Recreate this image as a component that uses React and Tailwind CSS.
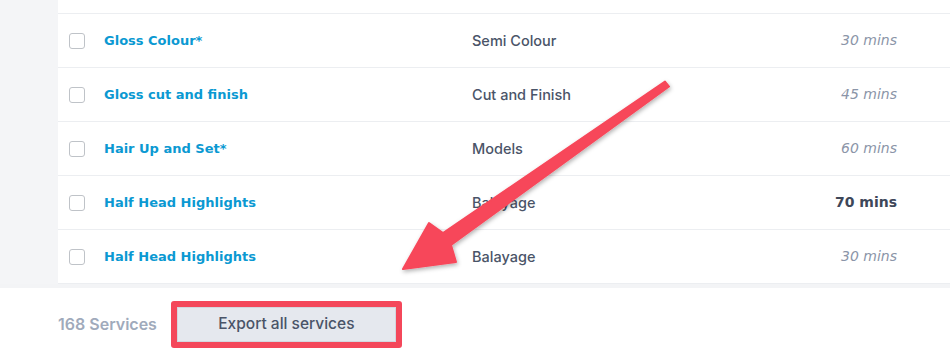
import React from "react";

const rows = [
  { name: "Gloss Colour*", category: "Semi Colour", duration: "30 mins", muted: true },
  { name: "Gloss cut and finish", category: "Cut and Finish", duration: "45 mins", muted: true },
  { name: "Hair Up and Set*", category: "Models", duration: "60 mins", muted: true },
  { name: "Half Head Highlights", category: "Balayage", duration: "70 mins", muted: false },
  { name: "Half Head Highlights", category: "Balayage", duration: "30 mins", muted: true },
];

function Arrow() {
  return (
    <svg
      className="absolute left-0 top-0 pointer-events-none"
      width="950"
      height="355"
      viewBox="0 0 950 355"
    >
      <defs>
        <filter id="shadow" x="-10%" y="-10%" width="130%" height="130%">
          <feDropShadow dx="1" dy="2" stdDeviation="2" floodColor="#000" floodOpacity="0.3" />
        </filter>
      </defs>
      <polygon
        points="669,86.5 451,245 456,262 403,269 429,223 443,233 665,81.5"
        fill="#f7475a"
        stroke="#f7475a"
        strokeWidth="2"
        strokeLinejoin="round"
        filter="url(#shadow)"
      />
    </svg>
  );
}

export default function App() {
  return (
    <div className="relative w-[950px] h-[355px] overflow-hidden bg-white font-['DejaVu_Sans',sans-serif]">
      <div className="flex h-[284px]">
        <div className="w-[58px] bg-[#f4f5f7]" />
        <div className="flex-1">
          <div className="h-[14px] border-b border-[#eceef1]" />
          {rows.map((row, i) => (
            <div
              key={i}
              className="flex items-center h-[54px] border-b border-[#eceef1] pl-[11px]"
            >
              <span className="w-4 h-4 rounded-[3px] border border-[#bfc3c8] bg-white" />
              <span className="ml-[19px] w-[368px] text-[13px] font-bold text-[#0b99d2]">
                {row.name}
              </span>
              <span className="font-['Inter',sans-serif] text-[14.5px] font-medium text-[#4a5468]">
                {row.category}
              </span>
              <span
                className={
                  row.muted
                    ? "flex-1 text-right pr-[53px] text-[14px] italic text-[#8b95a8]"
                    : "flex-1 text-right pr-[53px] text-[14px] font-semibold text-[#3e4759]"
                }
              >
                {row.duration}
              </span>
            </div>
          ))}
        </div>
      </div>
      <div className="h-[4px] bg-[#f3f4f6]" />
      <div className="flex items-center h-[67px] pl-[58px] pt-[5px] font-['Inter',sans-serif]">
        <span className="text-[16px] font-semibold text-[#a0aabb]">168 Services</span>
        <div className="ml-[14px] rounded-[3px] border-[6px] border-[#f4475a]">
          <div className="w-[219px] h-[35px] flex items-center justify-center bg-[#e5e8ee] border border-[#d3d7de] text-[15.5px] font-medium text-[#4a5468]">
            Export all services
          </div>
        </div>
      </div>
      <Arrow />
    </div>
  );
}
